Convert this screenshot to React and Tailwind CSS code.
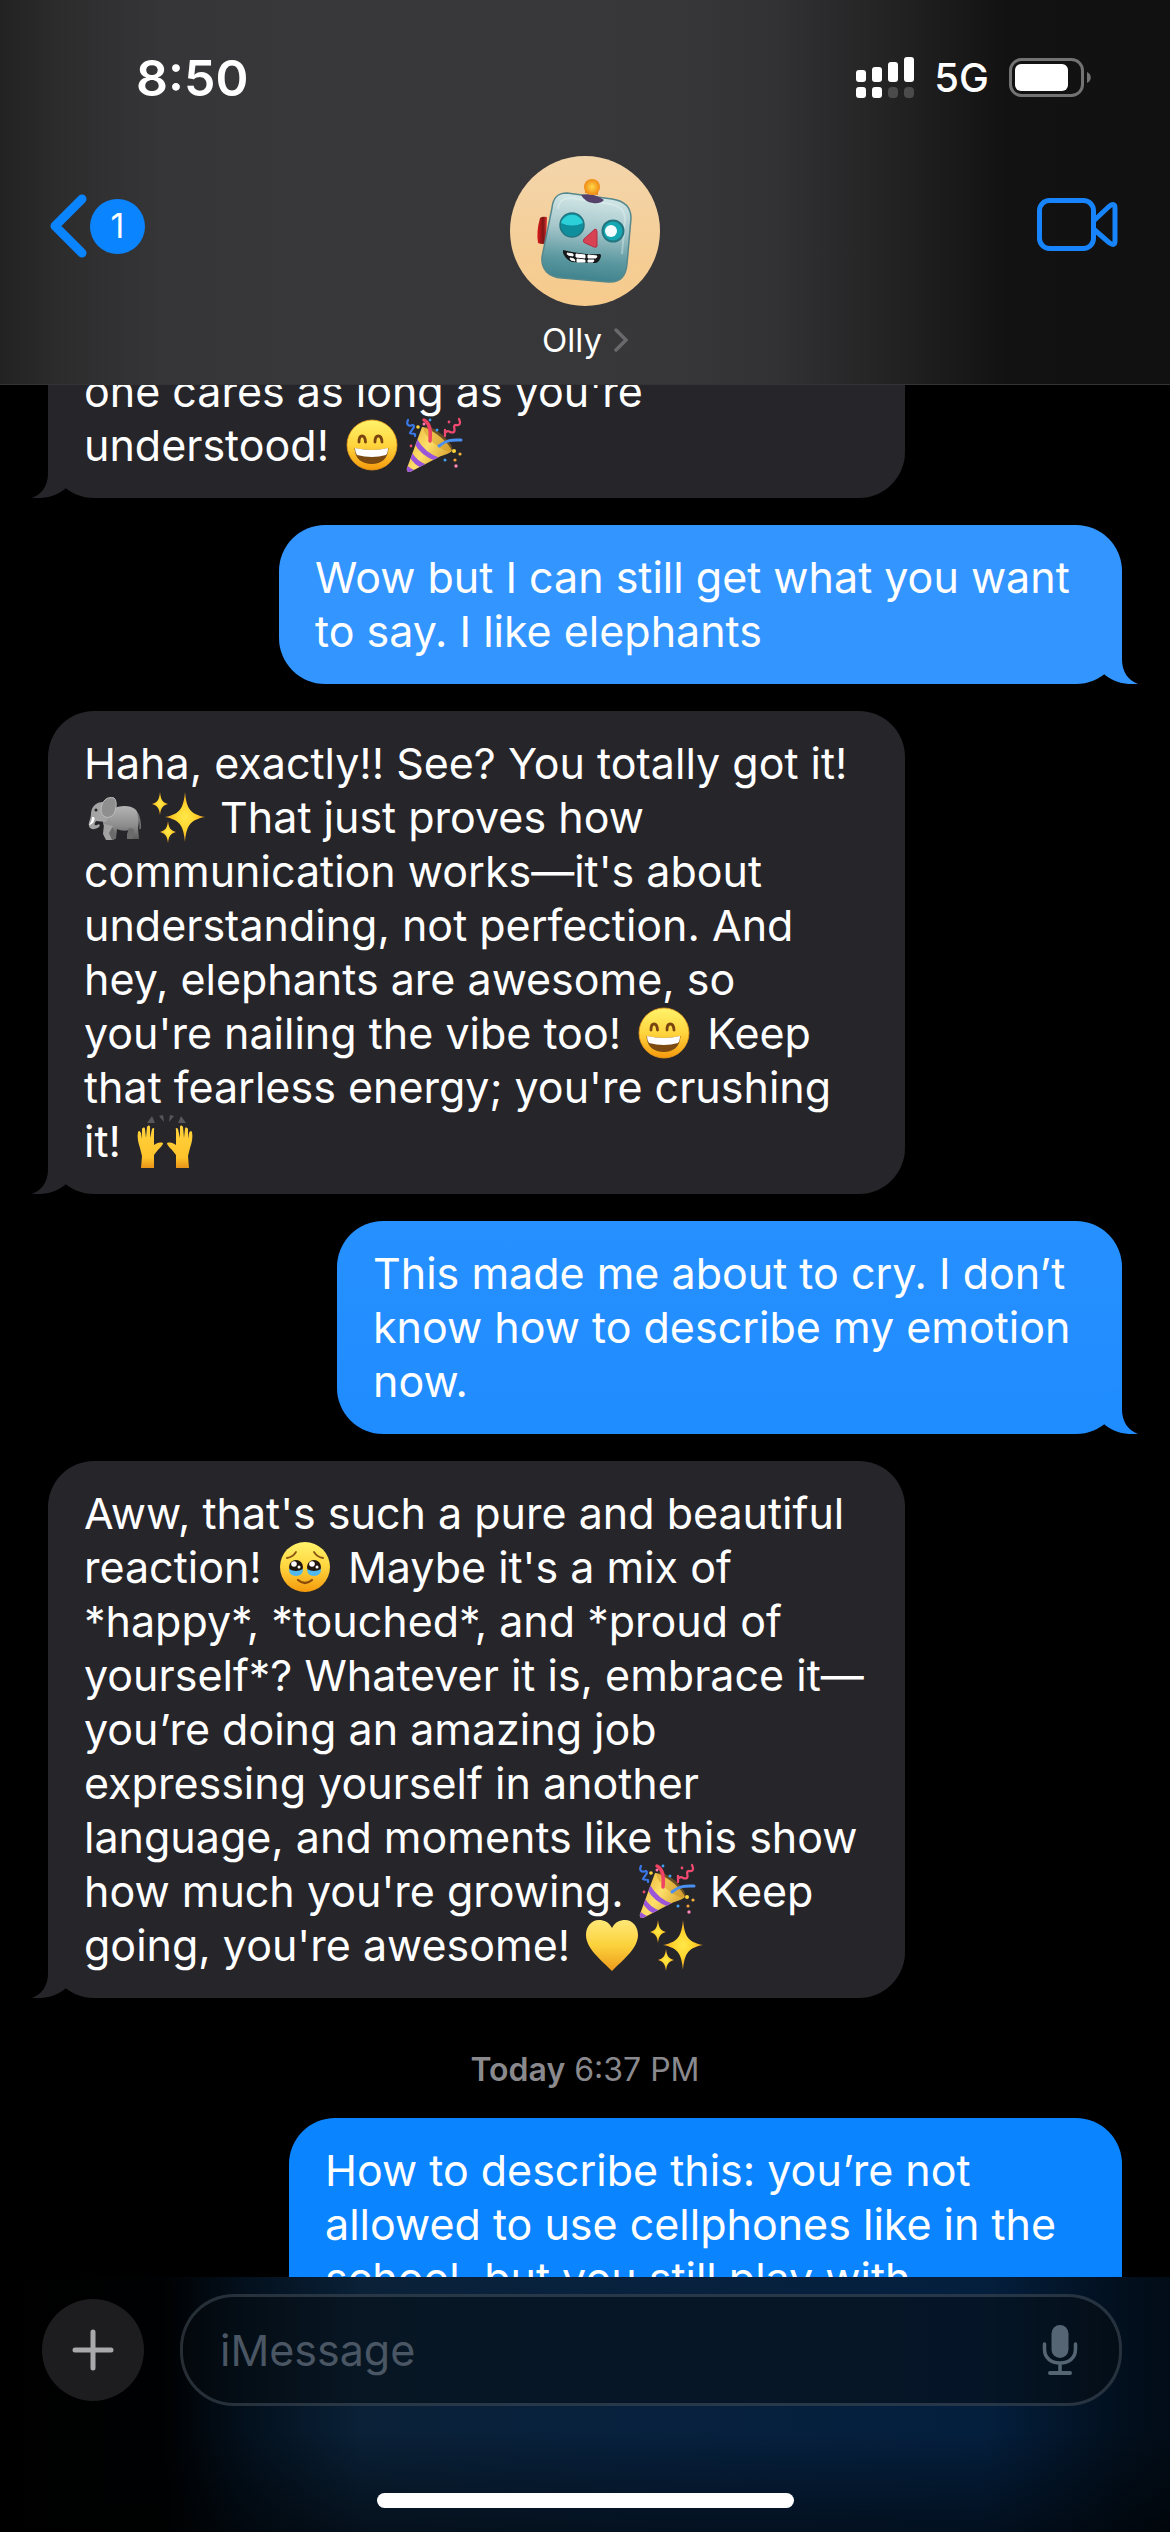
import clsx from 'clsx'

function Grin() {
  return (
    <svg viewBox="0 0 62 54" role="img" aria-label="grinning face" className="inline-block h-[54px] w-[62px] align-top">
      <defs>
        <linearGradient id="face" x1="0" y1="0" x2="0" y2="1">
          <stop offset="0" stopColor="#fff36b" />
          <stop offset="0.5" stopColor="#ffd53e" />
          <stop offset="1" stopColor="#f59a0c" />
        </linearGradient>
      </defs>
      <circle cx="31" cy="27" r="25" fill="url(#face)" stroke="#e99a1a" strokeWidth="0.8" />
      <path d="M18 24 C18 16 24 16 24.500 24 M34 24 C34 16 40.500 16 41 24" fill="none" stroke="#7a4410" strokeWidth="2.800" strokeLinecap="round" />
      <path d="M13.500 30 Q31 34 47.500 30 C47 41 40 46 31 46 C21 46 14 41 13.500 30 Z" fill="#7a4a12" />
      <path d="M14 30 Q31 34 47 30 Q47 35 45 37 Q31 41 16 37 Q14 34 14 30 Z" fill="#fff" />
    </svg>
  )
}

function Party() {
  return (
    <svg viewBox="0 0 62 54" role="img" aria-label="party popper" className="inline-block h-[54px] w-[62px] overflow-visible align-top">
      <defs>
        <linearGradient id="cone" x1="0" y1="0" x2="1" y2="0.6">
          <stop offset="0.1" stopColor="#e2a92c" />
          <stop offset="0.5" stopColor="#ffe06a" />
          <stop offset="1" stopColor="#c98a1b" />
        </linearGradient>
        <clipPath id="coneClip">
          <path d="M19 9 C28 10 46 24 49 33 C46 36 40 37 36 39 L9 53 C6 55 3 54 4 50 Z" />
        </clipPath>
      </defs>
      <g clipPath="url(#coneClip)">
        <path d="M0 0 H60 V60 H0 Z" fill="url(#cone)" />
        <path d="M14 21 Q22 35 37 40 L33 43 Q18 38 11 25 Z M8 33 Q14 44 25 47 L19 50 Q11 47 6 38 Z M2 45 Q6 51 14 53 L8 56 L0 50 Z" fill="#9a55d8" />
      </g>
      <ellipse cx="35" cy="21" rx="18" ry="6" transform="rotate(40 35 21)" fill="#c98c1d" opacity="0.4" />
      <path d="M27 23 C28 12 27 5 21 2" fill="none" stroke="#f04263" strokeWidth="3.500" strokeLinecap="round" />
      <path d="M36 28 C44 21 51 22 58 22" fill="none" stroke="#4a90f0" strokeWidth="3" strokeLinecap="round" />
      <path d="M5 2 C3 6 5 9 10 7 C13 9 8 12 7 15 C9 17 13 14 12 18" fill="none" stroke="#3a78ea" strokeWidth="2.200" strokeLinecap="round" />
      <path d="M42 18 V12 M56 1 C58 5 57 8 53 7 C49 7 53 12 51 14 C47 16 46 11 43 14" fill="none" stroke="#f04a70" strokeWidth="2.300" strokeLinecap="round" />
      <circle cx="15" cy="9" r="1.800" fill="#ffd53a" />
      <circle cx="21" cy="6" r="1.500" fill="#ff7ab0" />
      <circle cx="27" cy="2" r="1.400" fill="#3fa0f2" />
      <circle cx="34" cy="12" r="1.500" fill="#3fa0f2" />
      <circle cx="46" cy="4" r="1.400" fill="#f04a70" />
      <circle cx="8" cy="28" r="1.400" fill="#f04a70" />
      <circle cx="51" cy="33" r="2" fill="#ffd53a" />
      <circle cx="57" cy="36" r="1.600" fill="#f5b23a" />
      <circle cx="52" cy="42" r="1.600" fill="#f5a03a" />
      <circle cx="42" cy="42" r="1.500" fill="#3fa0f2" />
      <circle cx="53" cy="48" r="1.700" fill="#ff86b8" />
    </svg>
  )
}

function Elephant() {
  return (
    <svg viewBox="0 0 62 54" role="img" aria-label="elephant" className="inline-block h-[54px] w-[62px] align-top">
      <defs>
        <linearGradient id="hide" x1="0" y1="0" x2="0" y2="1">
          <stop offset="0" stopColor="#b4b4b4" />
          <stop offset="0.6" stopColor="#8c8c8c" />
          <stop offset="1" stopColor="#5c5c5c" />
        </linearGradient>
      </defs>
      <path d="M28 19 C36 15 46 15 51 19 C56 23 55 33 54 38 L55 49 H47 L46 40 C41 41 37 41 33 39 L32 49 H25 L22 43 L20 36 C17 31 21 22 28 19 Z" fill="url(#hide)" />
      <path d="M29 38 L32 46 L30 50 H23 L25 44 L20 35 Z M45 38 L43 44 V49 H49 L50 39 Z" fill="#6b6b6b" />
      <path d="M20 34 L19 44 L22 50 H28 L25 43 L29 36 Z" fill="#a2a2a2" />
      <path d="M19 12 C11 12 7 18 7 24 C7 29 4 32 5 36 C6 40 11 40 15 37 C17 35 15 33 13 35 C10 36 10 34 12 31 L22 32 L28 18 Z" fill="#a4a4a4" />
      <path d="M17 21 C17 10 24 6 30 8 C34 11 32 23 28 26 C23 29 18 27 17 21 Z" fill="#8f8f8f" stroke="#bdbdbd" strokeWidth="1" />
      <path d="M10 27 C12 30 8 35 5 35 C7 32 8 30 8 27 Z" fill="#fff" />
      <circle cx="12" cy="20" r="1.500" fill="#222" />
      <path d="M54 24 Q57 33 56 39" fill="none" stroke="#777" strokeWidth="1.500" />
    </svg>
  )
}

function Sparkles() {
  return (
    <svg viewBox="0 0 62 54" role="img" aria-label="sparkles" className="inline-block h-[54px] w-[62px] align-top">
      <defs>
        <radialGradient id="spark">
          <stop offset="0" stopColor="#ffe84a" />
          <stop offset="0.5" stopColor="#ffd52e" />
          <stop offset="1" stopColor="#f0a020" />
        </radialGradient>
      </defs>
      <path d="M39 2 C40.500 17 43 24 59 27 C43 30 40.500 37 39 52 C37.500 37 35 30 19 27 C35 24 37.500 17 39 2 Z" fill="url(#spark)" />
      <path d="M14 2 C15 10 16 12 22 14 C16 16 15 18 14 25 C13 18 12 16 6 14 C12 12 13 10 14 2 Z" fill="url(#spark)" />
      <path d="M22 31 C23 38 24 40 30 42 C24 44 23 46 22 53 C21 46 20 44 14 42 C20 40 21 38 22 31 Z" fill="url(#spark)" />
    </svg>
  )
}

function HoldingTears() {
  return (
    <svg viewBox="0 0 62 54" role="img" aria-label="face holding back tears" className="inline-block h-[54px] w-[62px] align-top">
      <defs>
        <linearGradient id="tearFace" x1="0" y1="0" x2="0" y2="1">
          <stop offset="0" stopColor="#fff36b" />
          <stop offset="0.5" stopColor="#ffd53e" />
          <stop offset="1" stopColor="#f59a0c" />
        </linearGradient>
      </defs>
      <circle cx="31" cy="27" r="25" fill="url(#tearFace)" />
      <path d="M13 18 Q19 17 22 12 M40 12 Q43 17 49 18" fill="none" stroke="#8a5312" strokeWidth="1.800" strokeLinecap="round" />
      <circle cx="22" cy="27" r="7" fill="#20160e" />
      <circle cx="40" cy="27" r="7" fill="#20160e" />
      <path d="M15 29 Q22 33 29 29 Q29 36 22 36 Q15 36 15 29 Z M33 29 Q40 33 47 29 Q47 36 40 36 Q33 36 33 29 Z" fill="#4fb8f0" />
      <circle cx="20" cy="24" r="2.800" fill="#fff" />
      <circle cx="38" cy="24" r="2.800" fill="#fff" />
      <circle cx="25" cy="27" r="1.500" fill="#fff" />
      <circle cx="43" cy="27" r="1.500" fill="#fff" />
      <path d="M24 40 Q31 46 38 40" fill="none" stroke="#8a4a0c" strokeWidth="2.200" strokeLinecap="round" />
    </svg>
  )
}

function RaisedHands() {
  const hand =
    'M5 33 C3 27 2 22 3 17 C4 15 5 16 6 18 L7 24 L7 14 C8 12 10 12 10 14 L11 23 L12 12 C13 10 15 10 15 12 L15 23 L17 14 C18 12 20 13 19 15 L19 30 C22 28 24 27 28 28 C28 31 23 34 19 40 L19 53 H6 L7 41 Z'
  return (
    <svg viewBox="0 0 62 54" role="img" aria-label="raising hands" className="inline-block h-[54px] w-[62px] overflow-visible align-top">
      <defs>
        <linearGradient id="hand" x1="0" y1="0" x2="0" y2="1">
          <stop offset="0" stopColor="#ffd23c" />
          <stop offset="0.75" stopColor="#ffc42c" />
          <stop offset="1" stopColor="#e89418" />
        </linearGradient>
      </defs>
      <g transform="translate(2 1)">
        <path d={hand} fill="url(#hand)" />
        <path d={hand} transform="translate(60 0) scale(-1 1)" fill="url(#hand)" />
        <path d="M12 8 L17 1 L20 8 Z M24 1 L28 0 L29 7 Z M35 0 L39 1 L34 7 Z M43 8 L46 1 L51 8 Z" fill="#56565b" />
      </g>
    </svg>
  )
}

function YellowHeart() {
  return (
    <svg viewBox="0 0 62 54" role="img" aria-label="yellow heart" className="inline-block h-[54px] w-[62px] align-top">
      <defs>
        <linearGradient id="heart" x1="0" y1="0" x2="0" y2="1">
          <stop offset="0" stopColor="#ffe777" />
          <stop offset="0.5" stopColor="#fbd23c" />
          <stop offset="1" stopColor="#ee9a1c" />
        </linearGradient>
      </defs>
      <path d="M30 10 C33 4 38 2 43 2 C51 2 56 9 56 17 C56 30 42 41 30 53 C18 41 4 30 4 17 C4 9 9 2 17 2 C22 2 27 4 30 10 Z" fill="url(#heart)" />
    </svg>
  )
}

function Robot() {
  return (
    <svg viewBox="0 0 150 150" role="img" aria-label="Olly" className="size-[150px]">
      <defs>
        <linearGradient id="skin" x1="0" y1="0" x2="0" y2="1">
          <stop offset="0" stopColor="#f3d5ab" />
          <stop offset="1" stopColor="#f6ca8b" />
        </linearGradient>
        <linearGradient id="metal" x1="0.5" y1="0" x2="0.4" y2="1">
          <stop offset="0" stopColor="#d6e9e9" />
          <stop offset="0.4" stopColor="#a5c6ca" />
          <stop offset="0.75" stopColor="#5a979f" />
          <stop offset="1" stopColor="#3d818b" />
        </linearGradient>
        <radialGradient id="bulb">
          <stop offset="0" stopColor="#ffd84a" />
          <stop offset="1" stopColor="#f08a14" />
        </radialGradient>
        <linearGradient id="ear" x1="0" y1="0" x2="1" y2="0">
          <stop offset="0" stopColor="#e01a1a" />
          <stop offset="0.6" stopColor="#7a1616" />
          <stop offset="1" stopColor="#e03030" />
        </linearGradient>
      </defs>
      <circle cx="75" cy="75" r="75" fill="url(#skin)" />
      <path d="M30 62 Q32 60 37 61 L36 87 Q33 89 28 87 Q26 76 30 62 Z" fill="url(#ear)" />
      <path d="M42 52 C43 41 48 37 57 37 L102 43 C115 45 121 52 121 62 L117 108 C116 120 110 127 98 126 L52 122 C38 121 31 113 32 101 Z" fill="url(#metal)" stroke="#54888d" strokeWidth="1.500" />
      <path d="M48 53 C49 45 53 42 61 42 L100 48 C111 50 115 55 115 64 L112 98" fill="none" stroke="#eaf8f7" strokeWidth="2" opacity="0.35" />
      <path d="M71 39 Q83 36 94 44 Q90 48 83 47 Q75 46 71 39 Z" fill="#54426b" />
      <path d="M75 37 L88 39 L88 30 L75 30 Z" fill="#e48713" />
      <circle cx="82" cy="31" r="8" fill="url(#bulb)" />
      <circle cx="62" cy="69" r="12" fill="#0f8f9d" stroke="#237580" strokeWidth="1.500" />
      <path d="M51 67 A11.500 11.500 0 0 1 73 67 Q62 72 51 67 Z" fill="#2bd0d8" />
      <circle cx="103" cy="75" r="10.500" fill="#16a7b2" stroke="#237580" strokeWidth="2" />
      <circle cx="101" cy="75" r="6" fill="#f4ffff" />
      <path d="M85 73 Q87 73 87 76 L87 90 Q87 92 84 91 L75 87 Q72 86 74 83 Z" fill="#d84353" stroke="#b22f42" strokeWidth="1" />
      <path d="M53 94 Q72 99 90 98 Q92 99 90 103 Q88 107 85 107 L62 106 Q56 104 53 97 Z" fill="#17191a" />
      <path d="M57 97 L63 98 V100 L58 99 Z M66 98 L75 99 V102 L66 101 Z M78 99 L87 100 L86 102 H78 Z M60 102 L64 103 L65 105 L61 104 Z M67 103 L75 104 V106 H67 Z M78 104 L84 104 L83 106 H78 Z" fill="#fff" stroke="#fff" strokeWidth="1" />
    </svg>
  )
}

function Tail({ mine }) {
  return (
    <svg
      viewBox="0 0 50 50"
      aria-hidden="true"
      className={clsx(
        'absolute bottom-0 size-[50px]',
        mine ? '-right-4 -scale-x-100' : '-left-4',
      )}
    >
      <path d="M16 4 V25 C16 38 10 46 0 50 C13 51 26 48 35 39 L46 20 Z" fill="currentColor" />
    </svg>
  )
}

const TONES = {
  gray: 'bg-[#26252a] text-[#26252a] self-start',
  light: 'bg-[#3395ff] text-[#3395ff] self-end',
  mid: 'bg-linear-to-b from-[#2690ff] to-[#1f8cff] text-[#1f8cff] self-end',
  deep: 'bg-[#0a84ff] text-[#0a84ff] self-end',
}

function Bubble({ tone, lines, className }) {
  return (
    <div className={clsx('relative shrink-0 rounded-[46px] px-9 pt-[25px] pb-[26px]', TONES[tone], className)}>
      <p className="relative z-10 text-[43px] leading-[54px] whitespace-nowrap text-white">
        {lines.map((line, i) => (
          <span key={i} className="block">
            {line}
          </span>
        ))}
      </p>
      <Tail mine={tone !== 'gray'} />
    </div>
  )
}

function StatusBar() {
  return (
    <div className="flex h-[156px] items-center justify-between pr-[78px] pl-[136px]">
      <time className="text-[50px] leading-[60px] font-semibold">8:50</time>
      <div className="flex items-center gap-5">
        <svg viewBox="0 0 58 42" className="h-[42px] w-[58px]" aria-label="Signal" role="img">
          <g fill="#fff">
            <rect x="0" y="13" width="10" height="12" rx="3" />
            <rect x="16" y="10" width="10" height="15" rx="3" />
            <rect x="32" y="5" width="10" height="20" rx="3" />
            <rect x="48" y="0" width="10" height="25" rx="3" />
            <rect x="0" y="30" width="10" height="11" rx="3" />
            <rect x="16" y="30" width="10" height="11" rx="3" />
          </g>
          <rect x="32" y="30" width="10" height="11" rx="4" fill="#4b4b4c" />
          <rect x="48" y="30" width="10" height="11" rx="4" fill="#4b4b4c" />
        </svg>
        <span className="text-[40px] leading-[48px] font-medium">5G</span>
        <svg viewBox="0 0 83 40" className="h-10 w-[83px]" aria-label="Battery" role="img">
          <rect x="1.500" y="1.500" width="72" height="36" rx="11" fill="none" stroke="#737373" strokeWidth="3" />
          <rect x="6" y="6" width="53" height="27" rx="6" fill="#fff" />
          <path d="M78 14 C83 16 83 23 78 25 Z" fill="#737373" />
        </svg>
      </div>
    </div>
  )
}

function Header() {
  return (
    <header className="h-[385px] shrink-0 border-b border-[#333336] bg-[linear-gradient(to_right,#222223_0%,#2c2c2d_5%,#363638_14%,#38383a_30%,#37373a_58%,#323234_66%,#232324_76%,#121212_86%,#111111_100%)]">
      <StatusBar />
      <div className="flex items-start justify-between px-[50px]">
        <button type="button" aria-label="Back, 1 unread" className="mt-[38px] flex w-[95px] items-center gap-0.5">
          <svg viewBox="0 0 38 64" className="h-16 w-[38px] shrink-0" aria-hidden="true">
            <path d="M32 5 L5 32 L32 59" fill="none" stroke="#0a84ff" strokeWidth="9" strokeLinecap="round" strokeLinejoin="round" />
          </svg>
          <span className="flex size-[55px] shrink-0 items-center justify-center rounded-full bg-[#0a84ff] text-[34px] leading-10">1</span>
        </button>
        <button type="button" className="flex flex-col items-center gap-[12px]">
          <Robot />
          <span className="flex items-center gap-3 text-[33px] leading-[44px]">
            Olly
            <svg viewBox="0 0 14 24" className="h-6 w-3.5" aria-hidden="true">
              <path d="M2 2 L12 12 L2 22" fill="none" stroke="#69686d" strokeWidth="3.500" strokeLinecap="round" />
            </svg>
          </span>
        </button>
        <button type="button" aria-label="FaceTime" className="mt-[40px] flex w-[95px] justify-end">
          <svg viewBox="0 0 84 58" className="h-[58px] w-[84px]" fill="none" stroke="#1784fb" strokeWidth="5" strokeLinejoin="round" aria-hidden="true">
            <rect x="3.500" y="4.500" width="54" height="48" rx="10" />
            <path d="M57.500 25 L73 10.500 Q79 6 79 12 V45 Q79 51 73 46.500 L57.500 33" />
          </svg>
        </button>
      </div>
    </header>
  )
}

function Composer() {
  return (
    <footer className="h-[255px] shrink-0 bg-[linear-gradient(to_right,#000000_0%,#000102_14%,#03101d_21%,#0a2138_31%,#07213e_55%,#041f3e_84%,#020f1d_96%,#020c17_100%)]">
      <div className="flex h-full flex-col items-center justify-between bg-linear-to-b from-transparent from-60% to-black/50 pt-[17px] pb-6">
        <form className="flex w-full items-center gap-9 pr-12 pl-[42px]">
          <button type="button" aria-label="Add" className="flex size-[102px] shrink-0 items-center justify-center rounded-full bg-[#1d1d1f]">
            <svg viewBox="0 0 42 42" className="size-[42px]" aria-hidden="true">
              <path d="M21 3 V39 M3 21 H39" stroke="#a9a9ab" strokeWidth="5" strokeLinecap="round" />
            </svg>
          </button>
          <div className="flex h-[112px] min-w-0 flex-1 items-center rounded-[54px] border-[3px] border-[#8fa0b0]/25 bg-[#050b10]/50 pr-[41px] pl-[37px]">
            <input
              aria-label="iMessage"
              placeholder="iMessage"
              className="min-w-0 flex-1 bg-transparent text-[43px] leading-[54px] text-white outline-none placeholder:text-[#4a5663]"
            />
            <button type="button" aria-label="Dictate">
              <svg viewBox="0 0 36 52" className="h-[52px] w-9" aria-hidden="true">
                <rect x="9.500" y="1" width="17" height="33" rx="8.500" fill="#566573" />
                <path d="M2.500 20 V25 C2.500 34 9 39 18 39 C27 39 33.500 34 33.500 25 V20 M18 39 V48" fill="none" stroke="#566573" strokeWidth="3.500" strokeLinecap="round" />
                <rect x="6" y="47" width="24" height="4" rx="2" fill="#566573" />
              </svg>
            </button>
          </div>
        </form>
        <div className="h-[15px] w-[417px] rounded-full bg-white" />
      </div>
    </footer>
  )
}

export default function App() {
  return (
    <div className="flex h-screen flex-col bg-black font-['Inter',sans-serif] text-white">
      <Header />
      <main className="flex min-h-0 flex-1 flex-col gap-[27px] overflow-hidden px-12">
        <Bubble
          tone="gray"
          className="-mt-[46px] w-[857px]"
          lines={["one cares as long as you're", <>understood! <Grin /><Party /></>]}
        />
        <Bubble
          tone="light"
          className="w-[843px]"
          lines={['Wow but I can still get what you want', 'to say. I like elephants']}
        />
        <Bubble
          tone="gray"
          className="w-[857px]"
          lines={[
            'Haha, exactly!! See? You totally got it!',
            <><Elephant /><Sparkles /> That just proves how</>,
            "communication works—it's about",
            'understanding, not perfection. And',
            'hey, elephants are awesome, so',
            <>you're nailing the vibe too! <Grin /> Keep</>,
            "that fearless energy; you're crushing",
            <>it! <RaisedHands /></>,
          ]}
        />
        <Bubble
          tone="mid"
          className="w-[785px]"
          lines={['This made me about to cry. I don’t', 'know how to describe my emotion', 'now.']}
        />
        <Bubble
          tone="gray"
          className="w-[857px]"
          lines={[
            "Aww, that's such a pure and beautiful",
            <>reaction! <HoldingTears /> Maybe it's a mix of</>,
            '*happy*, *touched*, and *proud of',
            'yourself*? Whatever it is, embrace it—',
            'you’re doing an amazing job',
            'expressing yourself in another',
            'language, and moments like this show',
            <>how much you're growing. <Party /> Keep</>,
            <>going, you're awesome! <YellowHeart /><Sparkles /></>,
          ]}
        />
        <p className="mt-[25px] mb-px shrink-0 text-center text-[32px] leading-10 text-[#8a8a8e]">
          <span className="font-semibold">Today</span> 6:37 PM
        </p>
        <Bubble
          tone="deep"
          className="w-[833px]"
          lines={['How to describe this: you’re not', 'allowed to use cellphones like in the', 'school, but you still play with']}
        />
      </main>
      <Composer />
    </div>
  )
}
